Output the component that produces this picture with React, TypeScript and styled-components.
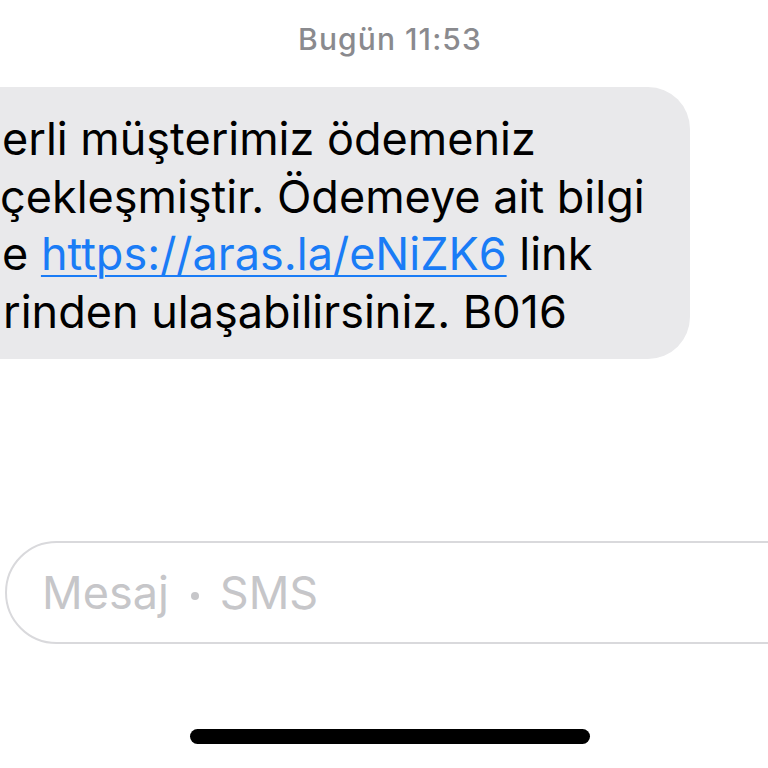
import React from "react";
import styled, { createGlobalStyle } from "styled-components";

const Global = createGlobalStyle`
  html, body {
    margin: 0;
    padding: 0;
    background: #ffffff;
  }
  body {
    font-family: Inter, "Noto Sans", "Liberation Sans", sans-serif;
  }
`;

const Screen = styled.div`
  width: 768px;
  height: 768px;
  overflow: hidden;
  background: #ffffff;
  display: flex;
  flex-direction: column;
  align-items: flex-start;
`;

const Stamp = styled.div`
  align-self: stretch;
  display: flex;
  justify-content: center;
  gap: 9px;
  padding: 21px 0 0 12px;
  font-size: 30px;
  line-height: 36px;
  letter-spacing: 1.1px;
  color: #8a8a8e;
`;

const StampPart = styled.span<{ $bold?: boolean }>`
  font-weight: ${(p) => (p.$bold ? 550 : 450)};
`;

const Bubble = styled.div`
  box-sizing: border-box;
  width: 730px;
  margin: 30px 0 0 -40px;
  padding: 23px 20px 19px 40px;
  background: #e9e9eb;
  border-radius: 42px;
  color: #000000;
  font-size: 45px;
  line-height: 57.5px;
  white-space: nowrap;
`;

const Line = styled.div<{ $shift?: number }>`
  margin-left: ${(p) => p.$shift ?? 0}px;
`;

const Link = styled.a`
  color: #1a7cf6;
  text-decoration: underline;
  text-decoration-thickness: 2px;
  text-underline-offset: 5px;
`;

const Input = styled.div`
  box-sizing: border-box;
  width: 820px;
  height: 103px;
  margin: 182px 0 0 5px;
  border: 2px solid #d9d9dc;
  border-radius: 52px;
  display: flex;
  align-items: center;
  padding-left: 35px;
  font-size: 45px;
  color: #c6c6c9;
`;

const Dot = styled.span`
  display: inline-block;
  width: 8px;
  height: 8px;
  border-radius: 50%;
  background: currentColor;
  margin: 6px 21px 0 22px;
`;

const HomeBar = styled.div`
  width: 400px;
  height: 15px;
  margin: 85px 0 0 190px;
  border-radius: 8px;
  background: #000000;
`;

export default function App() {
  return (
    <>
      <Global />
      <Screen>
        <Stamp>
          <StampPart $bold>Bugün</StampPart>
          <StampPart>11:53</StampPart>
        </Stamp>
        <Bubble>
          <Line $shift={2}>erli müşterimiz ödemeniz</Line>
          <Line>çekleşmiştir. Ödemeye ait bilgi</Line>
          <Line $shift={2}>
            e <Link>https://aras.la/eNiZK6</Link> link
          </Line>
          <Line $shift={3}>rinden ulaşabilirsiniz. B016</Line>
        </Bubble>
        <Input>
          Mesaj
          <Dot />
          SMS
        </Input>
        <HomeBar />
      </Screen>
    </>
  );
}
